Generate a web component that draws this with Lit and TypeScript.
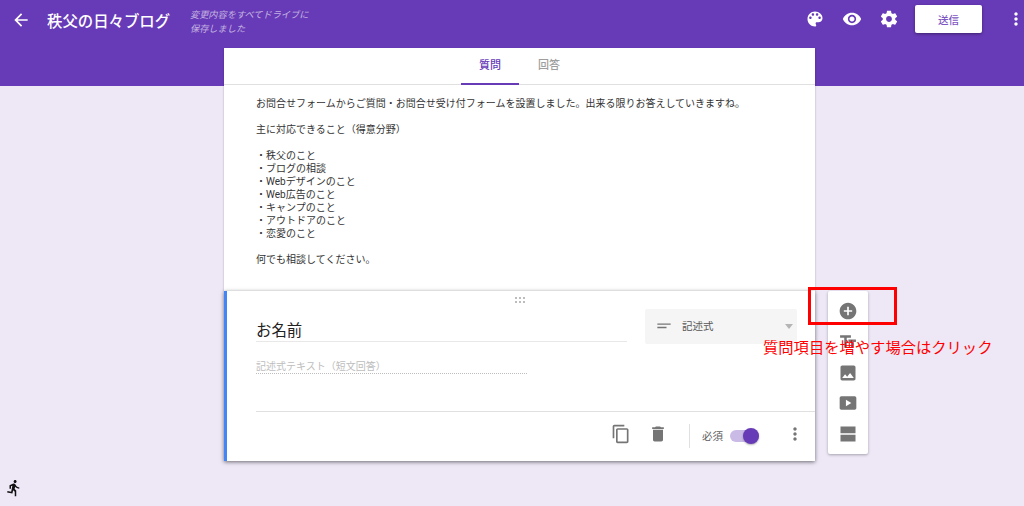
import { LitElement, css, html, svg } from 'lit';
import { customElement } from 'lit/decorators.js';

// material icon paths
const ICONS: Record<string, string> = {
    back: 'M20 11H7.83l5.59-5.59L12 4l-8 8 8 8 1.41-1.41L7.83 13H20v-2z',
    palette:
        'M12 3c-4.97 0-9 4.03-9 9s4.03 9 9 9c.83 0 1.5-.67 1.5-1.5 0-.39-.15-.74-.39-1.01-.23-.26-.38-.61-.38-.99 0-.83.67-1.5 1.5-1.5H16c2.76 0 5-2.24 5-5 0-4.42-4.03-8-9-8zm-5.5 9c-.83 0-1.5-.67-1.5-1.5S5.67 9 6.5 9 8 9.67 8 10.5 7.33 12 6.5 12zm3-4C8.67 8 8 7.33 8 6.5S8.67 5 9.5 5s1.5.67 1.5 1.5S10.33 8 9.5 8zm5 0c-.83 0-1.5-.67-1.5-1.5S13.67 5 14.5 5s1.5.67 1.5 1.5S15.33 8 14.5 8zm3 4c-.83 0-1.5-.67-1.5-1.5S16.67 9 17.5 9s1.5.67 1.5 1.5-.67 1.5-1.5 1.5z',
    eye: 'M12 4.5C7 4.5 2.73 7.61 1 12c1.73 4.39 6 7.5 11 7.5s9.27-3.11 11-7.5c-1.73-4.39-6-7.5-11-7.5zM12 17c-2.76 0-5-2.24-5-5s2.24-5 5-5 5 2.24 5 5-2.24 5-5 5zm0-8c-1.66 0-3 1.34-3 3s1.34 3 3 3 3-1.34 3-3-1.34-3-3-3z',
    gear: 'M19.43 12.98c.04-.32.07-.64.07-.98s-.03-.66-.07-.98l2.11-1.65c.19-.15.24-.42.12-.64l-2-3.46c-.12-.22-.39-.3-.61-.22l-2.49 1c-.52-.4-1.08-.73-1.69-.98l-.38-2.65C14.46 2.18 14.25 2 14 2h-4c-.25 0-.46.18-.49.42l-.38 2.65c-.61.25-1.17.59-1.69.98l-2.49-1c-.23-.09-.49 0-.61.22l-2 3.46c-.13.22-.07.49.12.64l2.11 1.65c-.04.32-.07.65-.07.98s.03.66.07.98l-2.11 1.65c-.19.15-.24.42-.12.64l2 3.46c.12.22.39.3.61.22l2.49-1c.52.4 1.08.73 1.69.98l.38 2.65c.03.24.24.42.49.42h4c.25 0 .46-.18.49-.42l.38-2.65c.61-.25 1.17-.59 1.69-.98l2.49 1c.23.09.49 0 .61-.22l2-3.46c.12-.22.07-.49-.12-.64l-2.11-1.65zM12 15.5c-1.93 0-3.5-1.57-3.5-3.5s1.57-3.5 3.5-3.5 3.5 1.57 3.5 3.5-1.57 3.5-3.5 3.5z',
    more: 'M12 8c1.1 0 2-.9 2-2s-.9-2-2-2-2 .9-2 2 .9 2 2 2zm0 2c-1.1 0-2 .9-2 2s.9 2 2 2 2-.9 2-2-.9-2-2-2zm0 6c-1.1 0-2 .9-2 2s.9 2 2 2 2-.9 2-2-.9-2-2-2z',
    add: 'M12 2C6.48 2 2 6.48 2 12s4.48 10 10 10 10-4.48 10-10S17.52 2 12 2zm5 11h-4v4h-2v-4H7v-2h4V7h2v4h4v2z',
    title: 'M2.5 4v3h5v12h3V7h5V4h-13zm19 5h-9v3h3v7h3v-7h3V9z',
    image: 'M21 19V5c0-1.1-.9-2-2-2H5c-1.1 0-2 .9-2 2v14c0 1.1.9 2 2 2h14c1.1 0 2-.9 2-2zM8.5 13.5l2.5 3.01L14.5 12l4.5 6H5l3.5-4.5z',
    video: 'M4 4h16c1.1 0 2 .9 2 2v12c0 1.1-.9 2-2 2H4c-1.1 0-2-.9-2-2V6c0-1.1.9-2 2-2zm5.5 4v8l6.5-4z',
    section: 'M3 3h18v8H3zM3 13h18v8H3z',
    copy: 'M16 1H4c-1.1 0-2 .9-2 2v14h2V3h12V1zm3 4H8c-1.1 0-2 .9-2 2v14c0 1.1.9 2 2 2h11c1.1 0 2-.9 2-2V7c0-1.1-.9-2-2-2zm0 16H8V7h11v14z',
    trash: 'M6 19c0 1.1.9 2 2 2h8c1.1 0 2-.9 2-2V7H6v12zM19 4h-3.5l-1-1h-5l-1 1H5v2h14V4z',
    short: 'M4 9h16v1.6H4zm0 4h11v1.6H4z',
    run: 'M13.49 5.48c1.1 0 2-.9 2-2s-.9-2-2-2-2 .9-2 2 .9 2 2 2zm-3.6 13.9l1-4.4 2.1 2v6h2v-7.5l-2.1-2 .6-3c1.3 1.5 3.3 2.5 5.5 2.5v-2c-1.9 0-3.5-1-4.3-2.4l-1-1.6c-.4-.6-1-1-1.7-1-.3 0-.5.1-.8.1l-5.2 2.2v4.7h2v-3.4l1.8-.7-1.6 8.1-4.9-1-.4 2 7 1.4z',
};

const icon = (name: string, cls = '') => html`<svg class="icon ${cls}" viewBox="0 0 24 24" fill-rule="evenodd">
    ${svg`<path d=${ICONS[name]}></path>`}
</svg>`;

const INTRO = [
    'お問合せフォームからご質問・お問合せ受け付フォームを設置しました。出来る限りお答えしていきますね。',
    '',
    '主に対応できること（得意分野）',
    '',
    '・秩父のこと',
    '・ブログの相談',
    '・Webデザインのこと',
    '・Web広告のこと',
    '・キャンプのこと',
    '・アウトドアのこと',
    '・恋愛のこと',
    '',
    '何でも相談してください。',
];

@customElement('app-root')
export class AppRoot extends LitElement {
    static override styles = css`
        :host {
            display: block;
            position: relative;
            height: 506px;
            overflow: hidden;
            background: #ede7f6;
            font-family: Roboto, 'Noto Sans CJK JP', sans-serif;
            color: #212121;
        }

        .icon {
            display: block;
            width: 20px;
            height: 20px;
            fill: #757575;
            flex: none;
        }

        .header {
            height: 86px;
            background: #673ab7;
            box-sizing: border-box;
            padding: 5px 0 0 11px;
            display: flex;
            align-items: flex-start;
            color: #fff;
        }

        .header .icon {
            fill: #fff;
        }

        .back {
            margin-top: 5px;
        }

        .doc-title {
            margin: 7px 0 0 16px;
            width: 143px;
            font-size: 15.4px;
            line-height: 20px;
            font-weight: 500;
        }

        .saved {
            width: 124px;
            font-size: 9.2px;
            line-height: 14px;
            font-style: italic;
            color: rgba(255, 255, 255, 0.62);
            margin-top: 3px;
        }

        .actions {
            margin-left: auto;
            display: flex;
            align-items: center;
            height: 28px;
        }

        .actions .tool {
            margin-right: 17px;
        }

        .send {
            width: 67px;
            height: 28px;
            margin: 0 24px 0 -1px;
            border-radius: 2px;
            background: #fff;
            color: #7e57c2;
            font-size: 10.5px;
            font-weight: 500;
            display: flex;
            align-items: center;
            justify-content: center;
            box-shadow: 0 1px 3px rgba(0, 0, 0, 0.4);
        }

        .more-top {
            margin-right: -2px;
        }

        .main {
            display: flex;
            gap: 13px;
            padding-left: 224px;
            margin-top: -38px;
            align-items: flex-start;
        }

        .column {
            width: 591px;
        }

        .intro {
            height: 243px;
            background: #fff;
            box-shadow: 0 1px 2px rgba(0, 0, 0, 0.25);
        }

        .tabs {
            height: 37px;
            box-sizing: border-box;
            border-bottom: 1px solid #e0e0e0;
            display: flex;
            justify-content: center;
            font-size: 11px;
            font-weight: 500;
            color: #9e9e9e;
        }

        .tab {
            width: 58px;
            text-align: center;
            line-height: 36px;
            height: 37px;
            box-sizing: border-box;
            margin-right: 1px;
        }

        .tab.on {
            color: #673ab7;
            border-bottom: 2px solid #673ab7;
        }

        .tab:last-child {
            margin-right: 0;
        }

        .desc {
            padding: 12px 32px 0;
            font-size: 10px;
            line-height: 13px;
            color: #333;
        }

        .desc div {
            min-height: 13px;
        }

        .question {
            height: 170px;
            box-sizing: border-box;
            border-left: 3px solid #4285f4;
            background: #fff;
            box-shadow: 0 1px 4px rgba(0, 0, 0, 0.55);
            display: flex;
            flex-direction: column;
        }

        .drag {
            height: 18px;
            display: grid;
            grid-template-columns: repeat(3, 2px);
            grid-auto-rows: 2px;
            gap: 2px;
            justify-content: center;
            align-content: center;
            margin-left: -3px;
        }

        .drag i {
            background: #bdbdbd;
        }

        .q-head {
            display: flex;
            padding-left: 29px;
            height: 35px;
        }

        .q-title {
            width: 371px;
            height: 33px;
            box-sizing: border-box;
            margin-right: 18px;
            padding-top: 13px;
            font-size: 15.4px;
            line-height: 19px;
            border-bottom: 1px solid #e8e8e8;
        }

        .select {
            width: 152px;
            height: 35px;
            background: #f5f5f5;
            border-radius: 2px;
            display: flex;
            align-items: center;
            padding: 0 4px 0 9px;
            box-sizing: border-box;
            font-size: 10.5px;
            color: #555;
        }

        .select .icon {
            margin: 0 8px 2px 0;
        }

        .select-label {
            padding-bottom: 2px;
        }

        .caret {
            margin-left: auto;
            border: 4.5px solid transparent;
            border-top: 5px solid #b5b5b5;
            border-bottom: 0;
        }

        .answer {
            width: 271px;
            height: 31px;
            box-sizing: border-box;
            margin: -1px 0 0 29px;
            padding-top: 18px;
            border-bottom: 1px dotted #bdbdbd;
            font-size: 10px;
            line-height: 12px;
            color: #bdbdbd;
        }

        .q-foot {
            margin: 37px 0 0 29px;
            height: 48px;
            border-top: 1px solid #e0e0e0;
            display: flex;
            align-items: center;
            justify-content: flex-end;
            padding: 0 10px 0 0;
            box-sizing: border-box;
        }

        .q-foot .icon {
            margin-bottom: 3px;
        }

        .q-foot .copy {
            margin-right: 17px;
        }

        .q-foot .sep {
            width: 1px;
            height: 24px;
            background: #e0e0e0;
            margin: 0 12px 0 21px;
        }

        .req {
            font-size: 10.5px;
            color: #616161;
            margin-right: 7px;
        }

        .switch {
            position: relative;
            width: 29px;
            height: 12px;
            border-radius: 6px;
            background: #c9bbe6;
            margin-right: 26px;
        }

        .switch::after {
            content: '';
            position: absolute;
            right: 0;
            top: -2px;
            width: 16px;
            height: 16px;
            border-radius: 50%;
            background: #673ab7;
            box-shadow: 0 1px 2px rgba(0, 0, 0, 0.3);
        }

        .toolbar {
            margin-top: 243px;
            width: 40px;
            height: 163px;
            box-sizing: border-box;
            padding-top: 10px;
            background: #fff;
            border-radius: 2px;
            box-shadow: 0 1px 3px rgba(0, 0, 0, 0.3);
            display: flex;
            flex-direction: column;
            align-items: center;
            gap: 10.75px;
        }

        .mark {
            position: absolute;
            left: 808px;
            top: 287px;
            width: 89px;
            height: 38px;
            box-sizing: border-box;
            border: 3px solid #f00;
        }

        .note {
            position: absolute;
            left: 763px;
            top: 338px;
            font-size: 15.3px;
            line-height: 20px;
            color: #f00;
            white-space: nowrap;
        }

        .runner {
            position: absolute;
            left: 5px;
            top: 479px;
            width: 18px;
            height: 18px;
            fill: #111;
        }
    `;

    override render() {
        return html`
            <div class="header">
                ${icon('back', 'back')}
                <div class="doc-title">秩父の日々ブログ</div>
                <div class="saved">変更内容をすべてドライブに保存しました</div>
                <div class="actions">
                    ${icon('palette', 'tool')} ${icon('eye', 'tool')} ${icon('gear', 'tool')}
                    <div class="send">送信</div>
                    ${icon('more', 'more-top')}
                </div>
            </div>
            <div class="main">
                <div class="column">
                    <div class="intro">
                        <div class="tabs">
                            <div class="tab on">質問</div>
                            <div class="tab">回答</div>
                        </div>
                        <div class="desc">${INTRO.map(line => html`<div>${line}</div>`)}</div>
                    </div>
                    <div class="question">
                        <div class="drag">${[0, 1, 2, 3, 4, 5].map(() => html`<i></i>`)}</div>
                        <div class="q-head">
                            <div class="q-title">お名前</div>
                            <div class="select">
                                ${icon('short')}<span class="select-label">記述式</span><span class="caret"></span>
                            </div>
                        </div>
                        <div class="answer">記述式テキスト（短文回答）</div>
                        <div class="q-foot">
                            ${icon('copy', 'copy')} ${icon('trash')}
                            <span class="sep"></span>
                            <span class="req">必須</span>
                            <span class="switch"></span>
                            ${icon('more')}
                        </div>
                    </div>
                </div>
                <div class="toolbar">
                    ${['add', 'title', 'image', 'video', 'section'].map(name => icon(name))}
                </div>
            </div>
            <div class="mark"></div>
            <div class="note">質問項目を増やす場合はクリック</div>
            ${icon('run', 'runner')}
        `;
    }
}
